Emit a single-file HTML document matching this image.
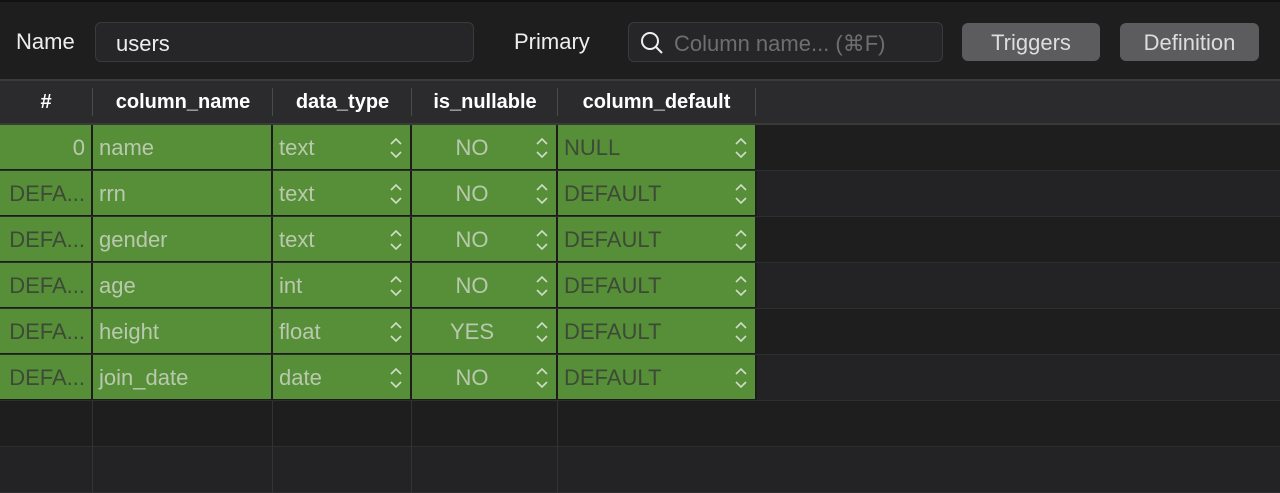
<!DOCTYPE html>
<html><head><meta charset="utf-8"><style>
*{margin:0;padding:0;box-sizing:border-box}
body{width:1280px;height:492px;background:#1e1e1e;font-family:"Liberation Sans",sans-serif;overflow:hidden;position:relative}
.top{position:absolute;left:0;top:0;width:1280px;height:79px;background:#1e1e1e;border-top:2px solid #111}
.lbl{position:absolute;color:#eee;font-size:22px;top:27px}
.field{position:absolute;top:20px;height:40px;background:#262628;border:1px solid #3a3a3c;border-radius:6px}
.btn{position:absolute;top:21px;height:38px;background:#5c5c5e;border-radius:6px;color:#ddd;font-size:22px;text-align:center;line-height:39px}
.hdr{position:absolute;top:79px;left:0;width:1280px;height:46px;background:#2b2b2d;border-top:2px solid #3a3a3a;border-bottom:2px solid #3a3a3a}
.hdr div{position:absolute;top:0;height:42px;line-height:43px;color:#fff;font-weight:bold;font-size:20px;text-align:center}
.sep{position:absolute;top:88px;width:1px;height:28px;background:#4a4a4a}
.row{position:absolute;left:0;width:1280px;height:46px}
.c{position:absolute;top:0;height:45px;line-height:46px;font-size:22px;padding-left:6px;background:#578f39;color:#b9c9ae;border-right:2px solid #1c1c1c;border-bottom:1px solid #1c1c1c}
.d{color:#3d4a36}
.ar{position:absolute;right:8px;top:12px;width:12px;height:22px}
</style></head><body>
<div class="top">
<div class="lbl" style="left:16px">Name</div>
<div class="field" style="left:95px;width:379px"><span style="position:absolute;left:20px;top:8px;color:#eee;font-size:22px">users</span></div>
<div class="lbl" style="left:514px">Primary</div>
<div class="field" style="left:628px;width:315px">
<svg style="position:absolute;left:10px;top:7px" width="26" height="26" viewBox="0 0 26 26"><circle cx="11" cy="11" r="8" fill="none" stroke="#eee" stroke-width="2"/><line x1="17" y1="17" x2="23" y2="23" stroke="#eee" stroke-width="2"/></svg>
<span style="position:absolute;left:45px;top:8px;color:#6e6e70;font-size:22px">Column name... (⌘F)</span></div>
<div class="btn" style="left:962px;width:138px">Triggers</div>
<div class="btn" style="left:1120px;width:139px">Definition</div>
</div>
<div class="hdr">
<div style="left:0;width:92px">#</div>
<div style="left:93px;width:180px">column_name</div>
<div style="left:273px;width:139px">data_type</div>
<div style="left:412px;width:146px">is_nullable</div>
<div style="left:558px;width:197px">column_default</div>
</div>
<div class="sep" style="left:92px"></div><div class="sep" style="left:272px"></div><div class="sep" style="left:411px"></div><div class="sep" style="left:557px"></div><div class="sep" style="left:755px"></div>
<div id="rows"></div>
<script>
var data=[["0","name","text","NO","NULL"],["DEFA...","rrn","text","NO","DEFAULT"],["DEFA...","gender","text","NO","DEFAULT"],["DEFA...","age","int","NO","DEFAULT"],["DEFA...","height","float","YES","DEFAULT"],["DEFA...","join_date","date","NO","DEFAULT"]];
var arr='<svg class="ar" viewBox="0 0 12 22"><polyline points="1,7 6,2 11,7" fill="none" stroke="#cfdcc6" stroke-width="1.6"/><polyline points="1,15 6,20 11,15" fill="none" stroke="#cfdcc6" stroke-width="1.6"/></svg>';
var h='';
for(var i=0;i<8;i++){
var t=125+i*46;
var bg=i%2?'#232325':'#1e1e1e';
h+='<div class="row" style="top:'+t+'px;background:'+bg+';border-bottom:1px solid #2e2e2e">';
if(i<6){var r=data[i];
h+='<div class="c '+(i?'d':'')+'" style="left:0;width:93px;text-align:right;padding-right:6px">'+r[0]+'</div>';
h+='<div class="c" style="left:93px;width:180px">'+r[1]+'</div>';
h+='<div class="c" style="left:273px;width:139px">'+r[2]+arr+'</div>';
h+='<div class="c" style="left:412px;width:146px;text-align:center;padding-right:30px">'+r[3]+arr+'</div>';
h+='<div class="c d" style="left:558px;width:199px">'+r[4]+arr+'</div>';
}else{
[92,272,411,557].forEach(function(x){h+='<div style="position:absolute;left:'+x+'px;top:0;width:1px;height:46px;background:#333"></div>'});
}
h+='</div>';}
document.getElementById('rows').innerHTML=h;
</script>
</body></html>
